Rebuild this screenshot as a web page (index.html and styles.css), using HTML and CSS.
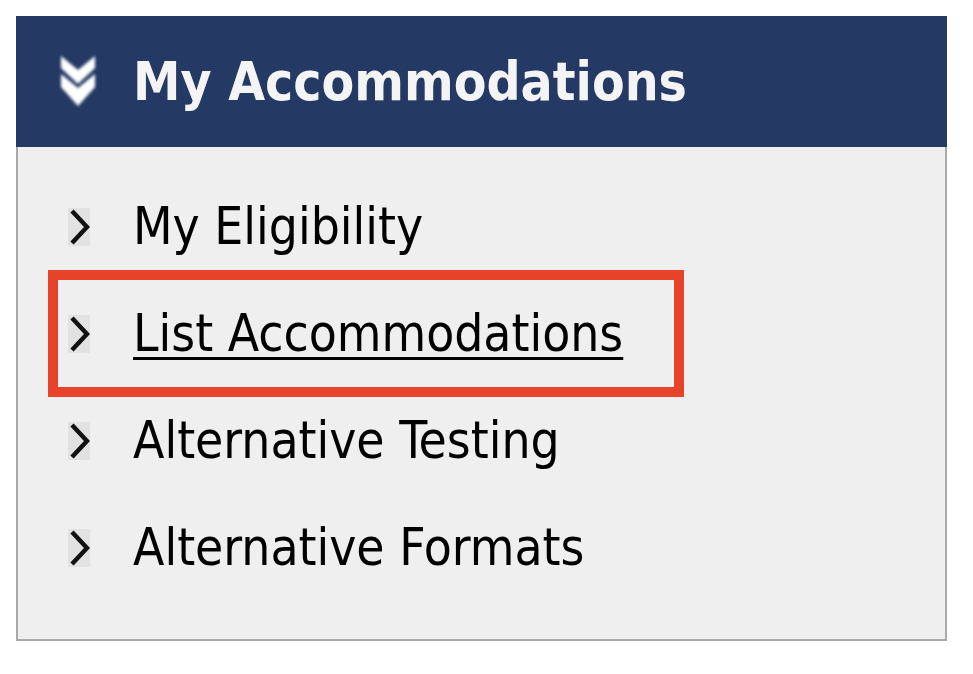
FILE: index.html
```html
<!DOCTYPE html>
<html>
<head>
  <link rel="stylesheet" href="styles.css">
</head>
<body>
  <div class="panel">
    <div class="panel-head">
      <svg class="head-icon" viewBox="0 0 36 52" fill="#fff">
        <polygon points="1 0 18 14 35 0 35 12 18 28 1 12"/>
        <polygon points="1 18 18 32 35 18 35 31 18 50 1 31"/>
      </svg>
      <h2>My Accommodations</h2>
    </div>
    <ul class="menu">
      <li>
        <span class="arrow"><svg viewBox="0 0 22 38" fill="none" stroke="#111" stroke-width="4.5"><polyline points="4 3 19 19 4 35"/></svg></span>
        <a>My Eligibility</a>
      </li>
      <li class="active">
        <span class="arrow"><svg viewBox="0 0 22 38" fill="none" stroke="#111" stroke-width="4.5"><polyline points="4 3 19 19 4 35"/></svg></span>
        <a class="link">List Accommodations</a>
      </li>
      <li>
        <span class="arrow"><svg viewBox="0 0 22 38" fill="none" stroke="#111" stroke-width="4.5"><polyline points="4 3 19 19 4 35"/></svg></span>
        <a>Alternative Testing</a>
      </li>
      <li>
        <span class="arrow"><svg viewBox="0 0 22 38" fill="none" stroke="#111" stroke-width="4.5"><polyline points="4 3 19 19 4 35"/></svg></span>
        <a>Alternative Formats</a>
      </li>
    </ul>
  </div>
</body>
</html>
```

FILE: styles.css
```css
body {
  margin: 0;
  padding: 16px;
  background: #fff;
  font-family: "DejaVu Sans Condensed", "DejaVu Sans", Verdana, sans-serif;
  font-stretch: condensed;
}
.panel {
  width: 931px;
  height: 625px;
  box-sizing: border-box;
  border: 2px solid #a9a9a9;
  border-top: none;
  background: #efefef;
}
.panel-head {
  height: 131px;
  margin: 0 -2px;
  background: #243a64;
  display: flex;
  align-items: center;
  padding-left: 44px;
  gap: 37px;
}
.head-icon {
  width: 36px;
  height: 52px;
  filter: blur(1.5px);
}
.panel-head h2 {
  margin: 0;
  color: #f4f4f4;
  font-size: 53px;
  font-weight: bold;
}
.menu {
  list-style: none;
  margin: 0;
  padding: 26px 0 0 50px;
}
.menu li {
  display: flex;
  align-items: center;
  height: 107px;
  gap: 43px;
  font-size: 51px;
  color: #000;
}
.arrow {
  width: 22px;
  height: 38px;
  background: #e2e2e2;
  display: flex;
}
.arrow svg {
  width: 22px;
  height: 38px;
}
.menu li.active {
  width: fit-content;
  margin-left: -10px;
  padding: 0 51px 0 10px;
  outline: 10px solid #e6432a;
}
.link {
  text-decoration: underline;
  text-decoration-thickness: 3px;
  text-underline-offset: 6px;
}
```
